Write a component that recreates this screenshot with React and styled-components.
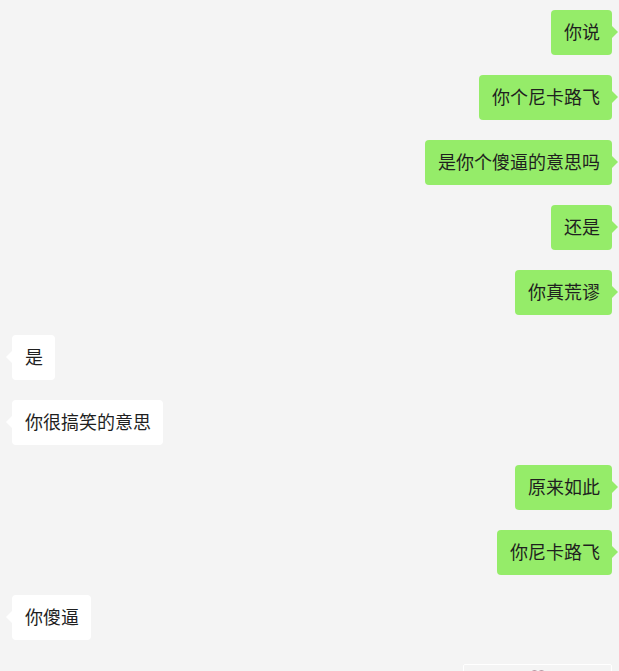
import styled, { createGlobalStyle } from "styled-components";

const GlobalStyle = createGlobalStyle`
  html, body {
    margin: 0;
    padding: 0;
    background: #f4f4f4;
  }
  body {
    font-family: "Noto Sans CJK SC", "Noto Sans", sans-serif;
  }
`;

const messages = [
  { self: true, text: "你说" },
  { self: true, text: "你个尼卡路飞" },
  { self: true, text: "是你个傻逼的意思吗" },
  { self: true, text: "还是" },
  { self: true, text: "你真荒谬" },
  { self: false, text: "是" },
  { self: false, text: "你很搞笑的意思" },
  { self: true, text: "原来如此" },
  { self: true, text: "你尼卡路飞" },
  { self: false, text: "你傻逼" },
];

const App = () => {
  return (
    <>
      <GlobalStyle />
      <StyledChat>
        {messages.map((m, i) => (
          <StyledRow key={i} $self={m.self}>
            <StyledBubble $self={m.self}>{m.text}</StyledBubble>
          </StyledRow>
        ))}
        <StyledRow $self>
          <StyledSticker>
            <svg width="16" height="10" viewBox="0 0 16 10">
              <circle cx="4.5" cy="6" r="3" fill="none" stroke="#a07a8a" strokeWidth="1.4" />
              <circle cx="11.5" cy="6" r="3" fill="none" stroke="#a07a8a" strokeWidth="1.4" />
            </svg>
          </StyledSticker>
        </StyledRow>
      </StyledChat>
    </>
  );
};

const StyledChat = styled.div`
  display: flex;
  flex-direction: column;
  gap: 20px;
  padding: 10px 7px 0 12px;
  height: 671px;
  box-sizing: border-box;
  overflow: hidden;
`;

const StyledRow = styled.div`
  display: flex;
  justify-content: ${(p) => (p.$self ? "flex-end" : "flex-start")};
`;

const StyledBubble = styled.div`
  position: relative;
  height: 45px;
  line-height: 43px;
  padding: 0 12px 2px 13px;
  box-sizing: border-box;
  font-size: 18px;
  color: #1f1f1f;
  white-space: nowrap;
  border-radius: 4px;
  background: ${(p) => (p.$self ? "#95ec69" : "#ffffff")};

  &::after {
    content: "";
    position: absolute;
    top: 16px;
    ${(p) => (p.$self ? "right: -6px;" : "left: -6px;")}
    border-top: 6px solid transparent;
    border-bottom: 6px solid transparent;
    ${(p) =>
      p.$self
        ? "border-left: 6px solid #95ec69;"
        : "border-right: 6px solid #ffffff;"}
  }
`;

const StyledSticker = styled.div`
  display: flex;
  justify-content: center;
  width: 149px;
  height: 80px;
  margin-top: 4px;
  padding-top: 3px;
  box-sizing: border-box;
  border: 1px solid #ffffff;
  border-radius: 2px;
`;

export default App;
